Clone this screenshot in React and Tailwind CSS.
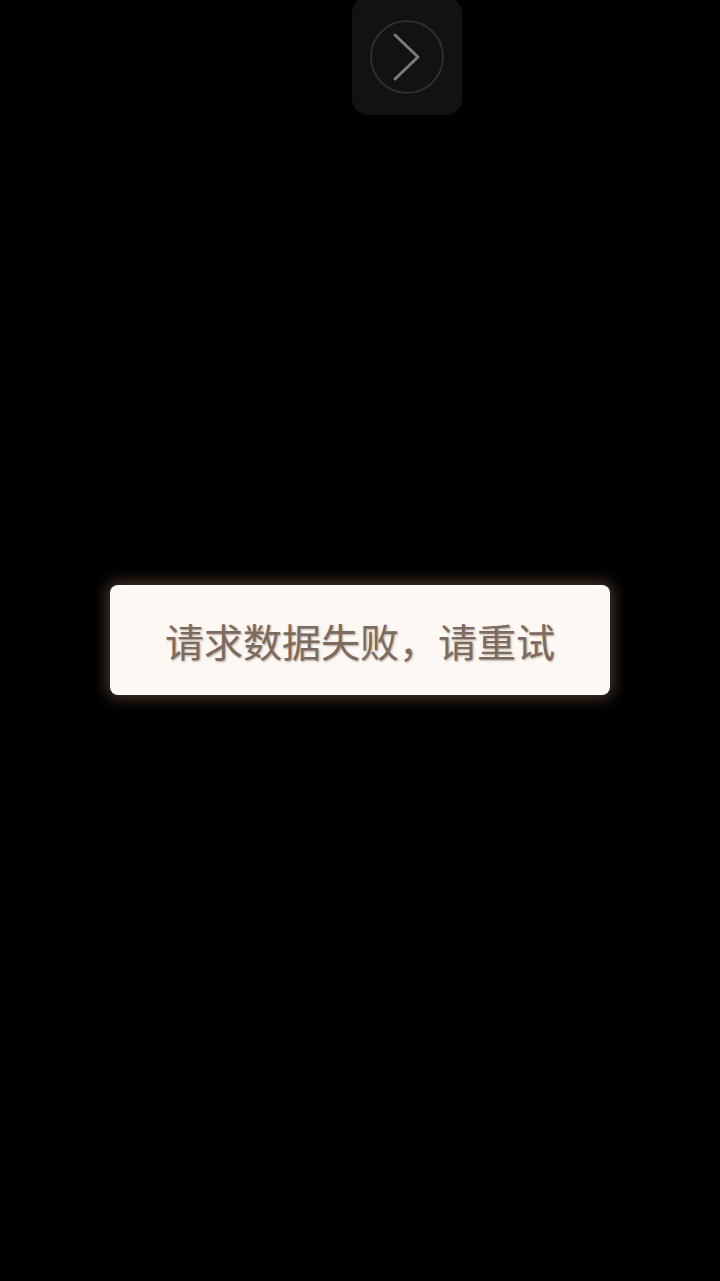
export default function App() {
  return (
    <div className="w-[720px] h-[1281px] bg-black relative overflow-hidden" style={{ fontFamily: '"Noto Sans CJK SC", "Noto Sans", sans-serif' }}>
      <div className="flex justify-center">
        <div className="ml-[94px] w-[110px] h-[118px] -mt-[3px] rounded-[16px] bg-[#121212] flex items-center justify-center">
          <svg width="76" height="76" viewBox="0 0 76 76" className="mt-[2px]">
            <circle cx="38" cy="38" r="36" fill="none" stroke="#2e2e2e" strokeWidth="2" />
            <path d="M26 16 L49 38 L26 60" fill="none" stroke="#7a7a7a" strokeWidth="3" strokeLinecap="round" strokeLinejoin="round" />
          </svg>
        </div>
      </div>
      <div className="absolute left-[110px] top-[585px] w-[500px] h-[110px] rounded-[8px] bg-[#fdf8f3] shadow-[0_0_14px_4px_rgba(120,90,70,0.55)] flex items-center justify-center">
        <span className="text-[39px] leading-none text-[#7d6b60] [text-shadow:1px_1px_2px_rgba(90,70,60,0.45)]">请求数据失败，请重试</span>
      </div>
    </div>
  );
}
